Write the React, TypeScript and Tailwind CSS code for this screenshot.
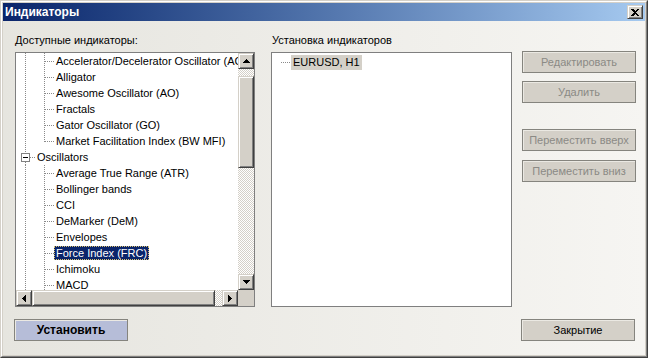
import React from "react";

const hatch =
  "bg-[repeating-conic-gradient(#d4d0c8_0_25%,#ffffff_0_50%)] bg-[length:2px_2px]";
const btn3d =
  "bg-[#d4d0c8] border border-t-[#d4d0c8] border-l-[#d4d0c8] border-r-[#404040] border-b-[#404040] shadow-[inset_1px_1px_#ffffff,inset_-1px_-1px_#808080]";

function Arrow({ dir }: { dir: "up" | "down" | "left" | "right" }) {
  const pts: Record<string, string> = {
    up: "3.5,0 7,4 0,4",
    down: "0,0 7,0 3.5,4",
    left: "4,0 4,7 0,3.5",
    right: "0,0 4,3.5 0,7",
  };
  const vertical = dir === "up" || dir === "down";
  return (
    <svg width={vertical ? 7 : 4} height={vertical ? 4 : 7} viewBox={vertical ? "0 0 7 4" : "0 0 4 7"}>
      <polygon points={pts[dir]} fill="#000" shapeRendering="crispEdges" />
    </svg>
  );
}

function ScrollBtn({ dir }: { dir: "up" | "down" | "left" | "right" }) {
  return (
    <div className={`w-[16px] h-[16px] shrink-0 flex items-center justify-center ${btn3d}`}>
      <Arrow dir={dir} />
    </div>
  );
}

const dot = { stroke: "#8a8a8a", strokeWidth: 1, strokeDasharray: "1 1", shapeRendering: "crispEdges" as const };

function RootLine() {
  return (
    <svg width="19" height="16" className="shrink-0">
      <line x1="9.5" y1="0" x2="9.5" y2="16" {...dot} />
    </svg>
  );
}

function GroupCell() {
  return (
    <svg width="19" height="16" className="shrink-0">
      <line x1="9.5" y1="0" x2="9.5" y2="4" {...dot} />
      <line x1="9.5" y1="13" x2="9.5" y2="16" {...dot} />
      <rect x="5.5" y="4.5" width="8" height="8" fill="#fff" stroke="#808080" shapeRendering="crispEdges" />
      <line x1="7" y1="8.5" x2="12" y2="8.5" stroke="#000" shapeRendering="crispEdges" />
      <line x1="14" y1="8.5" x2="19" y2="8.5" {...dot} />
    </svg>
  );
}

function ChildCell({ last }: { last?: boolean }) {
  return (
    <svg width="19" height="16" className="shrink-0">
      <line x1="9.5" y1="0" x2="9.5" y2={last ? 9 : 16} {...dot} />
      <line x1="10" y1="8.5" x2="19" y2="8.5" {...dot} />
    </svg>
  );
}

type Row = { label: string; kind: "child" | "group"; last?: boolean; selected?: boolean };

const rows: Row[] = [
  { label: "Accelerator/Decelerator Oscillator (AC)", kind: "child" },
  { label: "Alligator", kind: "child" },
  { label: "Awesome Oscillator (AO)", kind: "child" },
  { label: "Fractals", kind: "child" },
  { label: "Gator Oscillator (GO)", kind: "child" },
  { label: "Market Facilitation Index (BW MFI)", kind: "child", last: true },
  { label: "Oscillators", kind: "group" },
  { label: "Average True Range (ATR)", kind: "child" },
  { label: "Bollinger bands", kind: "child" },
  { label: "CCI", kind: "child" },
  { label: "DeMarker (DeM)", kind: "child" },
  { label: "Envelopes", kind: "child" },
  { label: "Force Index (FRC)", kind: "child", selected: true },
  { label: "Ichimoku", kind: "child" },
  { label: "MACD", kind: "child" },
];

function TreeRow({ r }: { r: Row }) {
  return (
    <div className="h-[16px] flex items-center shrink-0">
      {r.kind === "group" ? <GroupCell /> : <RootLine />}
      {r.kind === "child" && <ChildCell last={r.last} />}
      <span
        className={`px-[2px] h-[14px] leading-[14px] whitespace-nowrap ${
          r.selected
            ? "bg-[#0a246a] text-white outline outline-1 outline-dotted outline-[#d8c070] -outline-offset-1"
            : "text-black"
        }`}
      >
        {r.label}
      </span>
    </div>
  );
}

function DlgButton({ label, disabled, primary }: { label: string; disabled?: boolean; primary?: boolean }) {
  return (
    <div
      className={`w-[114px] h-[22px] flex items-center justify-center border border-[#85847e] shadow-[inset_1px_1px_#ebe9e3] ${
        primary ? "bg-[#b6bdd8] font-bold text-[12px] text-black" : "bg-[#d4d0c8]"
      } ${disabled ? "text-[#8b8a85]" : primary ? "" : "text-black"}`}
    >
      {label}
    </div>
  );
}

export default function App() {
  return (
    <div className="w-[648px] h-[358px] font-['Liberation_Sans',Arial,sans-serif] text-[11px] select-none">
      <div className="w-full h-full border border-t-[#d4d0c8] border-l-[#d4d0c8] border-r-[#404040] border-b-[#404040] bg-[#d4d0c8]">
        <div className="w-full h-full border border-t-white border-l-white border-r-[#808080] border-b-[#808080] p-px flex flex-col">
          {/* Title bar */}
          <div className="h-[18px] shrink-0 bg-gradient-to-r from-[#0a246a] to-[#a6caf0] flex items-center pl-[2px] pr-[2px]">
            <span className="text-white font-bold text-[12px] leading-none flex-1">Индикаторы</span>
            <div className={`w-[16px] h-[14px] flex items-center justify-center ${btn3d}`}>
              <svg width="8" height="7" viewBox="0 0 8 7">
                <path d="M0 0h2l2 2 2-2h2v1L5 3.5 8 6v1H6L4 5 2 7H0V6l3-2.5L0 1z" fill="#000" shapeRendering="crispEdges" />
              </svg>
            </div>
          </div>
          {/* Body */}
          <div className="flex-1 bg-gradient-to-r from-[#e6e5df] to-[#f6f5f2] pt-[13px] pl-[11px] flex flex-col">
            <div className="flex ml-px">
              {/* Left column */}
              <div className="w-[240px] flex flex-col">
                <div className="h-[18px] leading-[13px] text-black">Доступные индикаторы:</div>
                <div className="h-[255px] border border-[#7f7f7f] bg-white flex flex-col">
                  <div className="h-[237px] flex">
                    <div className="flex-1 overflow-hidden flex flex-col">
                      {rows.map((r) => (
                        <TreeRow key={r.label} r={r} />
                      ))}
                    </div>
                    <div className={`w-[16px] flex flex-col ${hatch}`}>
                      <ScrollBtn dir="up" />
                      <div className="flex-1 pt-[7px]">
                        <div className={`h-[92px] ${btn3d}`} />
                      </div>
                      <ScrollBtn dir="down" />
                    </div>
                  </div>
                  <div className="h-[16px] flex">
                    <ScrollBtn dir="left" />
                    <div className={`flex-1 ${hatch}`}>
                      <div className={`w-[183px] h-[16px] ${btn3d}`} />
                    </div>
                    <ScrollBtn dir="right" />
                    <div className="w-[16px] bg-[#d4d0c8]" />
                  </div>
                </div>
              </div>
              {/* Middle column */}
              <div className="w-[241px] ml-[16px] flex flex-col">
                <div className="h-[18px] leading-[13px] text-black pl-px">Установка индикаторов</div>
                <div className="h-[255px] border border-[#7f7f7f] bg-white pt-[1px]">
                  <div className="h-[16px] flex items-center">
                    <svg width="19" height="16" className="shrink-0">
                      <line x1="9" y1="8.5" x2="19" y2="8.5" {...dot} />
                    </svg>
                    <span className="px-[2px] h-[15px] leading-[15px] bg-[#d4d0c8] text-black whitespace-nowrap">
                      EURUSD, H1
                    </span>
                  </div>
                </div>
              </div>
              {/* Right column */}
              <div className="ml-[10px] pt-[17px] flex flex-col">
                <DlgButton label="Редактировать" disabled />
                <div className="mt-[8px]">
                  <DlgButton label="Удалить" disabled />
                </div>
                <div className="mt-[26px]">
                  <DlgButton label="Переместить вверх" disabled />
                </div>
                <div className="mt-[9px]">
                  <DlgButton label="Переместить вниз" disabled />
                </div>
              </div>
            </div>
            {/* Bottom row */}
            <div className="mt-[12px] w-[621px] flex justify-between">
              <DlgButton label="Установить" primary />
              <DlgButton label="Закрытие" />
            </div>
          </div>
        </div>
      </div>
    </div>
  );
}
